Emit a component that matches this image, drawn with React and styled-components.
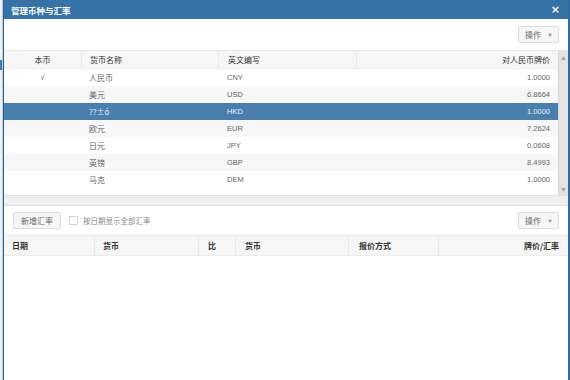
import React from "react";
import styled, { createGlobalStyle } from "styled-components";

const GlobalStyle = createGlobalStyle`
  html, body {
    margin: 0;
    padding: 0;
    background: #eef1f4;
    font-family: "Noto Sans CJK SC", "DejaVu Sans", sans-serif;
  }
`;

const rates = [
  { id: 1, base: true, name: "人民币", code: "CNY", rate: "1.0000" },
  { id: 2, name: "美元", code: "USD", rate: "6.8664" },
  { id: 3, name: "??±ó", code: "HKD", rate: "1.0000", selected: true },
  { id: 4, name: "欧元", code: "EUR", rate: "7.2624" },
  { id: 5, name: "日元", code: "JPY", rate: "0.0608" },
  { id: 6, name: "英镑", code: "GBP", rate: "8.4993" },
  { id: 7, name: "马克", code: "DEM", rate: "1.0000" },
];

const Page = styled.div`
  display: flex;
  width: 570px;
  height: 380px;
  overflow: hidden;
`;

const BackStrip = styled.div`
  width: 3px;
  background: #f2f2f2;
  border-right: 1px solid #b9cde2;
  display: flex;
  flex-direction: column;
  padding-top: 60px;
  box-sizing: border-box;
  span {
    display: block;
    height: 10px;
    background: #3f78ab;
  }
`;

const Dialog = styled.div`
  flex: 1;
  display: flex;
  flex-direction: column;
  background: #fff;
  border-left: 1px solid #2b5f94;
  border-right: 2px solid #2f6ca3;
`;

const TitleBar = styled.div`
  height: 19px;
  background: #3672a6;
  display: flex;
  align-items: center;
  justify-content: space-between;
  padding: 0 8px 0 7px;
  color: #fff;
  font-size: 8.5px;
  font-weight: bold;
`;

const Close = styled.span`
  font-family: "DejaVu Sans", sans-serif;
  font-size: 11px;
  font-weight: bold;
  line-height: 1;
`;

const Toolbar = styled.div`
  height: ${(p) => p.h}px;
  display: flex;
  align-items: center;
  padding: 0 9px;
  gap: 8px;
  box-sizing: border-box;
`;

const Spacer = styled.div`
  flex: 1;
`;

const Button = styled.div`
  height: 17px;
  padding: 0 ${(p) => (p.menu ? 6 : 7)}px;
  display: flex;
  align-items: center;
  gap: 7px;
  background: #f6f6f6;
  border: 1px solid #dcdcdc;
  border-radius: 2px;
  color: #666;
  font-size: 8px;
  box-sizing: border-box;
  i {
    font-style: normal;
    font-size: 4px;
    color: #999;
  }
`;

const Check = styled.label`
  display: flex;
  align-items: center;
  gap: 5px;
  color: #888;
  font-size: 7.5px;
  span {
    width: 9px;
    height: 9px;
    border: 1px solid #d2d2d2;
    box-sizing: border-box;
    background: #fff;
  }
`;

const TopGrid = styled.div`
  display: flex;
  border-top: 1px solid #e6e6e6;
`;

const GridMain = styled.div`
  flex: 1;
  display: flex;
  flex-direction: column;
`;

const Row = styled.div`
  display: grid;
  grid-template-columns: ${(p) => p.cols};
  height: ${(p) => p.h || 17}px;
  box-sizing: border-box;
  align-items: stretch;
  background: ${(p) => (p.selected ? "#4a7fad" : p.striped ? "#f7f7f7" : "#fff")};
  color: ${(p) => (p.selected ? "#eaf1f8" : "#666")};
`;

const HeadRow = styled(Row)`
  background: #f6f6f6;
  color: #333;
  border-bottom: 1px solid #ececec;
  font-weight: ${(p) => (p.bold ? "bold" : "normal")};
`;

const Cell = styled.div`
  display: flex;
  align-items: center;
  justify-content: ${(p) =>
    p.align === "center" ? "center" : p.align === "right" ? "flex-end" : "flex-start"};
  padding: 0 ${(p) => p.pr ?? 8}px 0 ${(p) => p.pl ?? 8}px;
  font-size: ${(p) => (p.latin ? 7.5 : 8)}px;
  font-family: ${(p) =>
    p.latin ? '"Liberation Sans", sans-serif' : '"Noto Sans CJK SC", sans-serif'};
  border-left: ${(p) => (p.divider ? "1px solid #e8e8e8" : "none")};
  white-space: nowrap;
  overflow: hidden;
`;

const Body = styled.div`
  height: 126px;
  display: flex;
  flex-direction: column;
`;

const Scrollbar = styled.div`
  width: 10px;
  background: #e4e4e4;
  border-left: 1px solid #d6d6d6;
  display: flex;
  flex-direction: column;
  justify-content: space-between;
  align-items: center;
  color: #aaa;
  font-size: 5px;
  padding: 3px 0 3px;
  box-sizing: border-box;
`;

const FooterBand = styled.div`
  height: 11px;
  box-sizing: border-box;
  background: #f0f0f0;
  border-top: 1px solid #e0e0e0;
  border-bottom: 1px solid #e4e4e4;
`;

const BottomGrid = styled.div`
  flex: 1;
  border-top: 1px solid #e6e6e6;
`;

const topCols = "77px 137px 138px 1fr";
const bottomCols = "90px 104px 37px 113px 90px 1fr";

export default function App() {
  return (
    <>
      <GlobalStyle />
      <Page>
        <BackStrip>
          <span />
        </BackStrip>
        <Dialog>
          <TitleBar>
            <span>管理币种与汇率</span>
            <Close>×</Close>
          </TitleBar>
          <Toolbar h={31}>
            <Spacer />
            <Button menu>
              操作<i>▼</i>
            </Button>
          </Toolbar>
          <TopGrid>
            <GridMain>
              <HeadRow cols={topCols} h={18}>
                <Cell align="center">本币</Cell>
                <Cell divider>货币名称</Cell>
                <Cell divider pl={9}>英文编写</Cell>
                <Cell divider align="right">对人民币牌价</Cell>
              </HeadRow>
              <Body>
                {rates.map((r, i) => (
                  <Row key={r.id} cols={topCols} striped={i % 2 === 1} selected={r.selected}>
                    <Cell align="center" latin>{r.base ? "√" : ""}</Cell>
                    <Cell>{r.name}</Cell>
                    <Cell latin pl={9}>{r.code}</Cell>
                    <Cell latin align="right">{r.rate}</Cell>
                  </Row>
                ))}
              </Body>
            </GridMain>
            <Scrollbar>
              <span>▲</span>
              <span>▼</span>
            </Scrollbar>
          </TopGrid>
          <FooterBand />
          <Toolbar h={29}>
            <Button>新增汇率</Button>
            <Check>
              <span />
              按日期显示全部汇率
            </Check>
            <Spacer />
            <Button menu>
              操作<i>▼</i>
            </Button>
          </Toolbar>
          <BottomGrid>
            <HeadRow cols={bottomCols} h={20} bold>
              <Cell>日期</Cell>
              <Cell divider>货币</Cell>
              <Cell divider pl={9}>比</Cell>
              <Cell divider pl={9}>货币</Cell>
              <Cell divider pl={10}>报价方式</Cell>
              <Cell divider align="right" pr={9}>牌价/汇率</Cell>
            </HeadRow>
          </BottomGrid>
        </Dialog>
      </Page>
    </>
  );
}
